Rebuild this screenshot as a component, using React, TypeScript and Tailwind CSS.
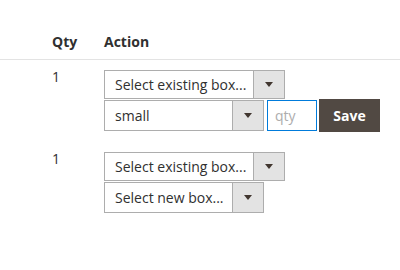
function Caret() {
  return (
    <svg width="8" height="5" viewBox="0 0 8 5" className="block">
      <path d="M0 0h8L4 5z" fill="#41362f" />
    </svg>
  )
}

function SelectBox({ label, width, height }: { label: string; width: string; height: string }) {
  return (
    <div className={`flex ${width} ${height} border border-[#adadad] bg-white`}>
      <div className="flex flex-1 items-center overflow-hidden whitespace-nowrap pl-[10px]">{label}</div>
      <div className="flex w-[31px] items-center justify-center border-l border-[#adadad] bg-[#e3e3e3]">
        <Caret />
      </div>
    </div>
  )
}

export default function App() {
  return (
    <div className="h-[270px] w-[400px] bg-white font-['Open_Sans',sans-serif] text-[14px] leading-[20px] text-[#303030]">
      {/* header */}
      <div className="flex border-b border-[#e3e3e3] pt-[32px] pb-[7px] font-bold">
        <div className="w-[104px] pl-[52px]">Qty</div>
        <div>Action</div>
      </div>

      {/* row 1 */}
      <div className="flex pt-[10px] pb-[20px]">
        <div className="w-[104px] pl-[52px]">
          <div className="-mt-[3px]">1</div>
        </div>
        <div className="flex flex-col">
          <SelectBox label="Select existing box..." width="w-[181px]" height="h-[29px]" />
          <div className="flex items-center">
            <SelectBox label="small" width="w-[160px]" height="h-[31px]" />
            <input
              placeholder="qty"
              className="ml-[3px] h-[31px] w-[50px] border border-[#007bdb] bg-white px-[7px] text-[14px] text-[#303030] outline-none placeholder:text-[#adadad]"
            />
            <button className="ml-[2px] h-[33px] w-[61px] bg-[#514943] text-[14px] font-bold text-white">
              Save
            </button>
          </div>
        </div>
      </div>

      {/* row 2 */}
      <div className="flex">
        <div className="w-[104px] pl-[52px]">
          <div className="-mt-[3px]">1</div>
        </div>
        <div className="flex flex-col gap-[1px]">
          <SelectBox label="Select existing box..." width="w-[181px]" height="h-[29px]" />
          <SelectBox label="Select new box..." width="w-[160px]" height="h-[31px]" />
        </div>
      </div>
    </div>
  )
}
